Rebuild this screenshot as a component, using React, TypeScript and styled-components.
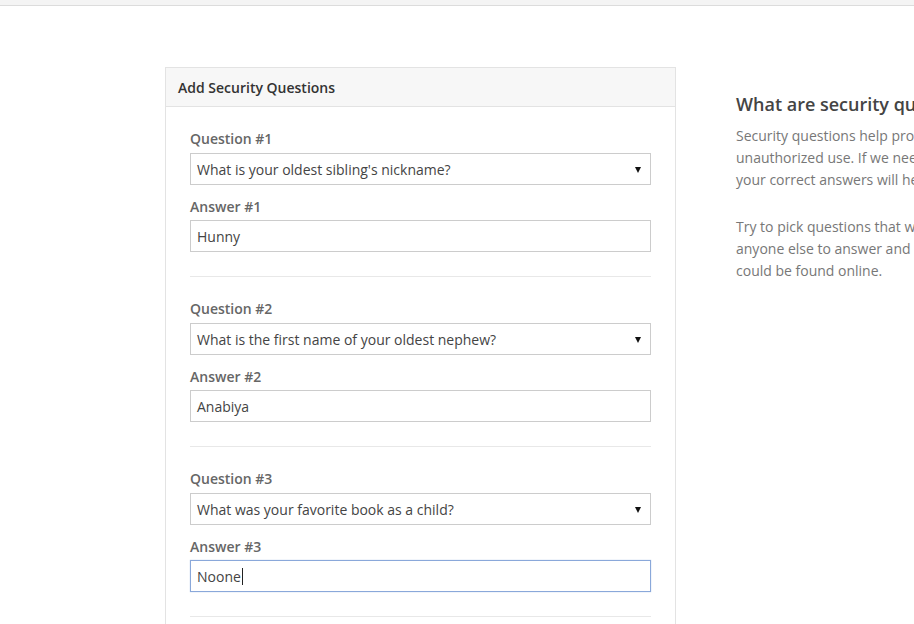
import React from "react";
import styled, { createGlobalStyle } from "styled-components";

const Global = createGlobalStyle`
  html, body { margin: 0; padding: 0; overflow: hidden; background: #fff; }
  body { font-family: "Open Sans", "Noto Sans", Arial, sans-serif; color: #333; }
  * { box-sizing: border-box; }
`;

const TopBar = styled.div`
  height: 6px;
  background: #f4f4f4;
  border-bottom: 1px solid #dcdcdc;
`;

const Page = styled.div`
  display: flex;
  align-items: flex-start;
  gap: 60px;
  padding: 61px 0 0 165px;
  width: 1400px;
`;

const Panel = styled.section`
  width: 511px;
  flex: none;
  border: 1px solid #e3e3e3;
  background: #fff;
`;

const PanelHeader = styled.div`
  height: 39px;
  display: flex;
  align-items: center;
  padding: 0 12px;
  background: #f7f7f7;
  border-bottom: 1px solid #e3e3e3;
  font-size: 14px;
  font-weight: 600;
  color: #333;
`;

const PanelBody = styled.div`
  padding: 22px 24px 0;
`;

const Group = styled.div`
  display: flex;
  flex-direction: column;
  padding-bottom: 24px;
  margin-bottom: 22px;
  border-bottom: 1px solid #e8e8e8;
`;

const Label = styled.label<{ $gap: number }>`
  font-size: 14px;
  line-height: 20px;
  font-weight: 600;
  color: #666;
  margin-bottom: ${(p) => p.$gap}px;
`;

const SelectWrap = styled.div`
  position: relative;
  margin-bottom: 12px;
`;

const Select = styled.div`
  height: 32px;
  display: flex;
  align-items: center;
  padding: 0 6px;
  border: 1px solid #cccccc;
  font-size: 14px;
  color: #444;
  background: #fff;
`;

const Arrow = styled.span`
  position: absolute;
  right: 10px;
  top: 14px;
  width: 0;
  height: 0;
  border-left: 3.5px solid transparent;
  border-right: 3.5px solid transparent;
  border-top: 6px solid #111;
`;

const TextBox = styled.div<{ $focused?: boolean }>`
  height: 32px;
  display: flex;
  align-items: center;
  padding: 0 6px;
  border: 1px solid ${(p) => (p.$focused ? "#8aa8da" : "#cccccc")};
  box-shadow: ${(p) => (p.$focused ? "0 0 1px rgba(102,140,210,0.5)" : "none")};
  font-size: 14px;
  color: #444;
  background: #fff;
`;

const Caret = styled.span`
  display: inline-block;
  width: 1px;
  height: 17px;
  background: #222;
  margin-left: 1px;
`;

const Side = styled.aside`
  width: 345px;
  flex: none;
  padding-top: 25px;
`;

const SideTitle = styled.h2`
  margin: 0 0 9px;
  font-size: 18px;
  line-height: 24px;
  font-weight: 600;
  color: #444;
`;

const SideText = styled.p`
  margin: 0 0 25px;
  font-size: 14px;
  line-height: 22px;
  color: #777;
`;

const items = [
  { q: "What is your oldest sibling's nickname?", a: "Hunny" },
  { q: "What is the first name of your oldest nephew?", a: "Anabiya" },
  { q: "What was your favorite book as a child?", a: "Noone", focused: true },
];

export default function App() {
  return (
    <>
      <Global />
      <TopBar />
      <Page>
        <Panel>
          <PanelHeader>Add Security Questions</PanelHeader>
          <PanelBody>
            {items.map((it, i) => (
              <Group key={i}>
                <Label $gap={4}>Question #{i + 1}</Label>
                <SelectWrap>
                  <Select>{it.q}</Select>
                  <Arrow />
                </SelectWrap>
                <Label $gap={3}>Answer #{i + 1}</Label>
                <TextBox $focused={it.focused}>
                  {it.a}
                  {it.focused && <Caret />}
                </TextBox>
              </Group>
            ))}
          </PanelBody>
        </Panel>
        <Side>
          <SideTitle>What are security questions?</SideTitle>
          <SideText>
            Security questions help protect your account from unauthorized use. If we need to
            verify your identity, your correct answers will help us know it's really you.
          </SideText>
          <SideText>
            Try to pick questions that would be difficult for anyone else to answer and avoid
            answers that
            <br />
            could be found online.
          </SideText>
        </Side>
      </Page>
    </>
  );
}
